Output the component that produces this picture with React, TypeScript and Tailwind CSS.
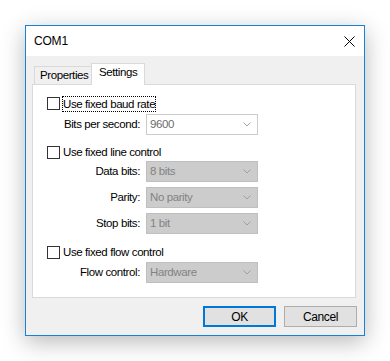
import React from 'react';

const Chevron = ({ color }: { color: string }) => (
  <svg width="8" height="5" viewBox="0 0 8 5" className="shrink-0">
    <polyline points="0.5,0.5 4,4 7.5,0.5" fill="none" stroke={color} strokeWidth="1" />
  </svg>
);

function Combo({ value, enabled = false }: { value: string; enabled?: boolean }) {
  return (
    <div
      className={
        enabled
          ? 'w-[112px] h-[21px] flex items-center justify-between pl-[3px] pr-[6px] bg-white border border-[#cccccc] text-[#6d6d6d]'
          : 'w-[112px] h-[21px] flex items-center justify-between pl-[3px] pr-[6px] bg-[#cccccc] border border-[#bfbfbf] text-[#838383]'
      }
    >
      <span>{value}</span>
      <Chevron color={enabled ? '#a6a6a6' : '#a0a0a0'} />
    </div>
  );
}

function Field({ label, value, enabled, className = '' }: { label: string; value: string; enabled?: boolean; className?: string }) {
  return (
    <div className={`flex items-center ${className}`}>
      <div className="w-[107px] text-right text-black">{label}</div>
      <div className="ml-[6px]">
        <Combo value={value} enabled={enabled} />
      </div>
    </div>
  );
}

function Check({ label, focused = false, className = '' }: { label: string; focused?: boolean; className?: string }) {
  return (
    <div className={`flex items-center h-[13px] pl-[14px] ${className}`}>
      <div className="w-[13px] h-[13px] border border-[#333333] bg-white shrink-0" />
      {focused ? (
        <span className="ml-[2px] h-[16px] flex items-center border border-dotted border-black text-black leading-[14px]">
          {label}
        </span>
      ) : (
        <span className="ml-[3px] text-black">{label}</span>
      )}
    </div>
  );
}

export default function App() {
  return (
    <div className="w-[390px] h-[361px] bg-white pt-[25px] pl-[25px] font-['Liberation_Sans',Arial,sans-serif] text-[11.5px] tracking-[-0.4px]">
      <div className="w-[340px] h-[311px] border border-[#1a82d6] bg-[#f0f0f0] flex flex-col shadow-[0_6px_22px_rgba(0,0,0,0.28)]">
        {/* title bar */}
        <div className="h-[30px] bg-white flex items-center justify-between pl-[8px] pr-[9px]">
          <span className="text-black text-[12px] tracking-[-0.2px]">COM1</span>
          <svg width="11" height="11" viewBox="0 0 11 11">
            <path d="M0.5 0.5 L10.5 10.5 M10.5 0.5 L0.5 10.5" stroke="#000" strokeWidth="1" />
          </svg>
        </div>

        {/* body */}
        <div className="flex flex-col pt-[7px] pl-[6px] pr-[8px]">
          <div className="flex items-end h-[21px] pl-[2px]">
            <div className="w-[57px] h-[18px] border-l border-t border-[#d9d9d9] bg-[#f0f0f0] pl-[5px] flex items-center text-black">
              Properties
            </div>
            <div className="relative z-10 w-[54px] h-[22px] -mb-px border-l border-t border-r border-[#d9d9d9] bg-white pl-[7px] pb-[3px] flex items-center text-black">
              Settings
            </div>
          </div>

          <div className="h-[214px] border border-[#d9d9d9] bg-white pt-[12px] flex flex-col">
            <Check label="Use fixed baud rate" focused />
            <Field label="Bits per second:" value="9600" enabled className="mt-[4px]" />
            <Check label="Use fixed line control" className="mt-[11px]" />
            <Field label="Data bits:" value="8 bits" className="mt-[2px]" />
            <Field label="Parity:" value="No parity" className="mt-[5px]" />
            <Field label="Stop bits:" value="1 bit" className="mt-[5px]" />
            <Check label="Use fixed flow control" className="mt-[12px]" />
            <Field label="Flow control:" value="Hardware" className="mt-[3px]" />
          </div>

          <div className="flex justify-end gap-[8px] mt-[8px] mr-[-1px]">
            <button className="w-[73px] h-[21px] border-2 border-[#0078d7] bg-[#e1e1e1] text-black text-[12px] flex items-center justify-center">
              OK
            </button>
            <button className="w-[73px] h-[21px] border border-[#adadad] bg-[#e1e1e1] text-black text-[12px] flex items-center justify-center">
              Cancel
            </button>
          </div>
        </div>
      </div>
    </div>
  );
}
